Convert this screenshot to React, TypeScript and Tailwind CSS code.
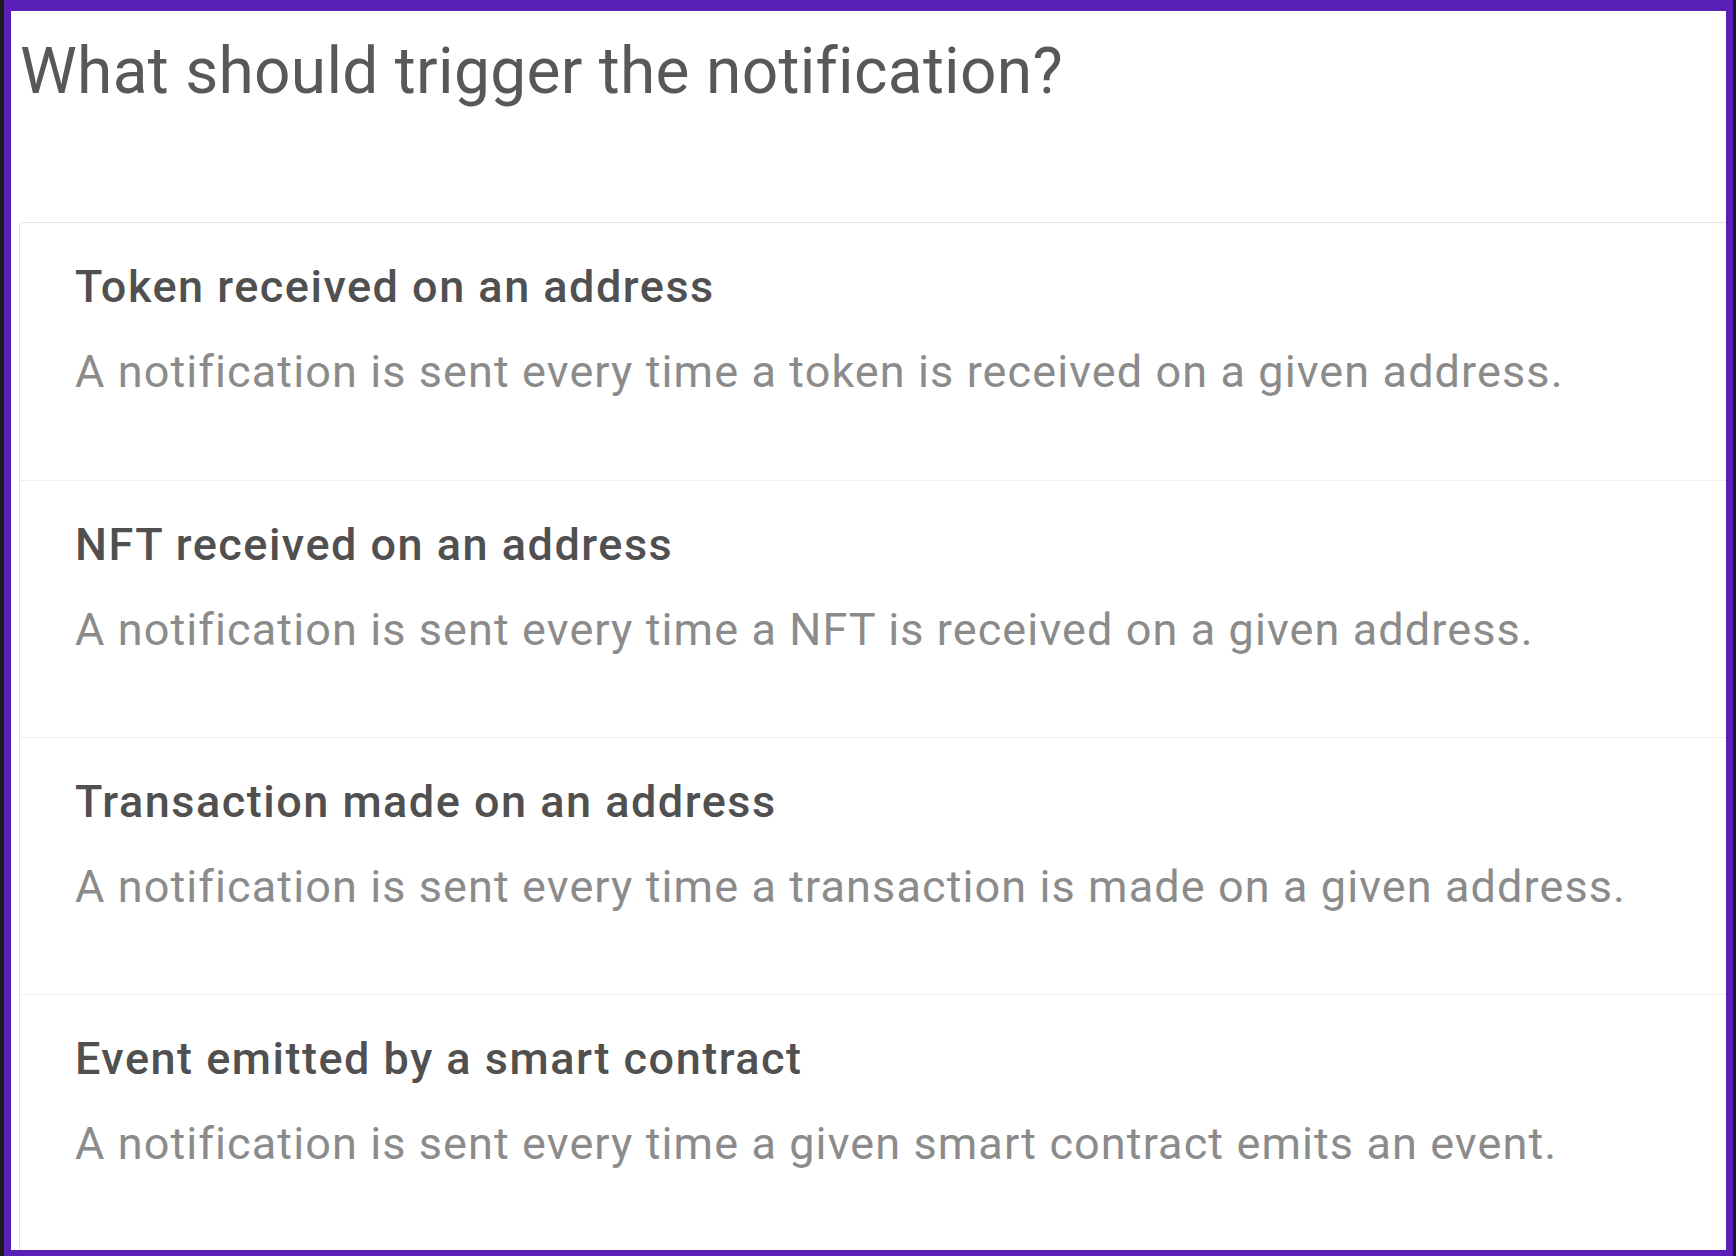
import React from "react";

const items = [
  {
    title: "Token received on an address",
    desc: "A notification is sent every time a token is received on a given address.",
  },
  {
    title: "NFT received on an address",
    desc: "A notification is sent every time a NFT is received on a given address.",
  },
  {
    title: "Transaction made on an address",
    desc: "A notification is sent every time a transaction is made on a given address.",
  },
  {
    title: "Event emitted by a smart contract",
    desc: "A notification is sent every time a given smart contract emits an event.",
  },
];

export default function App() {
  return (
    <div
      className="h-[1256px] w-[1736px] bg-[#1b1a1d] pl-[4px] pr-[3px] overflow-hidden"
      style={{ fontFamily: "Roboto, 'Noto Sans', sans-serif" }}
    >
      <div className="h-full border-t-[11px] border-l-[7px] border-r-[7px] border-b-[6px] border-[#5a1fb6] bg-white overflow-hidden">
        <h1 className="pl-[9px] pt-[23px] text-[64px] leading-[75px] font-normal text-[#585858] tracking-[0.3px]">
          What should trigger the notification?
        </h1>
        <div className="ml-[8px] mt-[113px] -mr-6 border border-[#e2e2e2] rounded-tl-[3px] bg-white">
          {items.map((it, i) => (
            <div
              key={i}
              className={
                "h-[257px] pl-[55px] pt-[37px] " +
                (i > 0 ? "border-t border-[#efefef]" : "")
              }
            >
              <div className="text-[45px] leading-[53px] font-medium text-[#505050] tracking-[1.5px]">
                {it.title}
              </div>
              <div className="mt-[32px] text-[45px] leading-[53px] font-normal text-[#8b8b8b] tracking-[1.1px]">
                {it.desc}
              </div>
            </div>
          ))}
        </div>
      </div>
    </div>
  );
}
